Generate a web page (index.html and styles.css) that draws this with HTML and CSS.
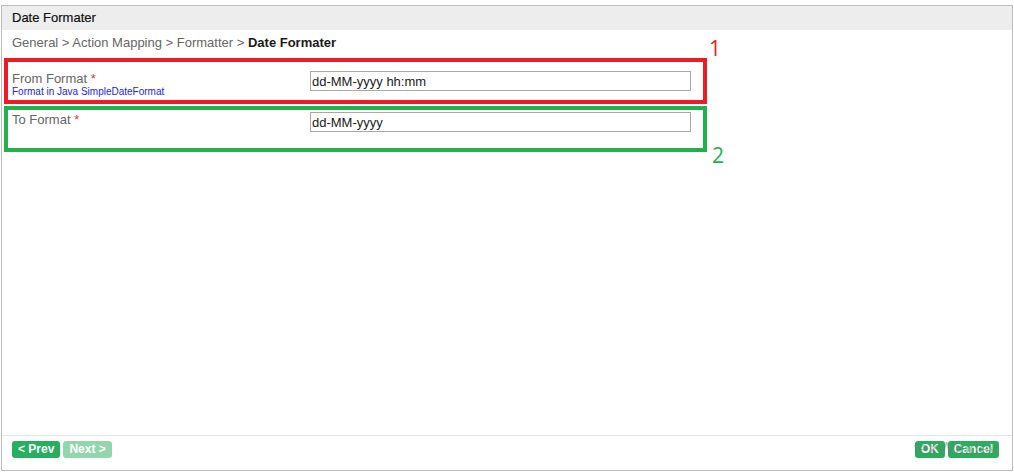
FILE: index.html
```html
<!DOCTYPE html>
<html>
<head>
<meta charset="utf-8">
<link rel="stylesheet" href="styles.css">
</head>
<body>
<div class="panel">
  <div class="panel-header">Date Formater</div>
  <div class="breadcrumb">General &gt; Action Mapping &gt; Formatter &gt; <b>Date Formater</b></div>
  <div class="form">
    <div class="row row-red">
      <div class="label">
        <div>From Format <span class="req">*</span></div>
        <div class="hint">Format in Java SimpleDateFormat</div>
      </div>
      <input class="field" type="text" value="dd-MM-yyyy hh:mm">
      <span class="mark mark-red">1</span>
    </div>
    <div class="row row-green">
      <div class="label">
        <div>To Format <span class="req">*</span></div>
      </div>
      <input class="field" type="text" value="dd-MM-yyyy">
      <span class="mark mark-green">2</span>
    </div>
  </div>
  <div class="footer">
    <div class="btns">
      <span class="btn">&lt; Prev</span>
      <span class="btn btn-disabled">Next &gt;</span>
    </div>
    <div class="btns">
      <span class="btn">OK</span>
      <span class="btn">Cancel</span>
    </div>
    <span class="watermark">tekWindev</span>
  </div>
</div>
</body>
</html>
```
FILE: styles.css
```css
html, body {
  margin: 0;
  padding: 0;
  background: #fff;
}
body {
  font-family: "Liberation Sans", Arial, sans-serif;
  font-size: 13px;
  color: #222;
}
.panel {
  box-sizing: border-box;
  margin: 5px 0 0 1px;
  width: 1012px;
  height: 466px;
  border: 1px solid #bdbdbd;
  display: flex;
  flex-direction: column;
}
.panel-header {
  height: 24px;
  line-height: 24px;
  background: #ededed;
  padding-left: 10px;
  color: #111;
  font-weight: 500;
  -webkit-text-stroke: 0.2px #111;
}
.breadcrumb {
  height: 26px;
  line-height: 26px;
  padding-left: 10px;
  color: #666;
}
.breadcrumb b {
  color: #1a1a1a;
}
.form {
  flex: 1;
  padding: 2px 0 0 2px;
  display: flex;
  flex-direction: column;
  gap: 2px;
}
.row {
  position: relative;
  box-sizing: border-box;
  width: 703px;
  height: 46px;
  border: 4px solid;
  display: flex;
  align-items: flex-start;
  padding-left: 5px;
}
.row-red {
  border-color: #ed1c24;
  padding-top: 9px;
}
.row-green {
  border-color: #22b14c;
  padding-top: 2px;
}
.label {
  width: 298px;
  margin-left: -1px;
  color: #666;
  line-height: 15px;
}
.req {
  color: #e33;
}
.hint {
  font-size: 10px;
  line-height: 11px;
  color: #2424ee;
}
.field {
  box-sizing: border-box;
  width: 381px;
  height: 20px;
  margin: 0;
  border: 1px solid #a9a9a9;
  padding: 0 1px;
  font-family: "Liberation Sans", Arial, sans-serif;
  font-size: 13px;
  color: #222;
  outline: none;
}
.mark {
  position: absolute;
  font-family: "Open Sans", "DejaVu Sans", sans-serif;
  font-size: 21px;
  line-height: 21px;
}
.mark-red {
  color: #ed1c24;
  right: -18px;
  top: -24px;
}
.mark-green {
  color: #22b14c;
  right: -21px;
  top: 35px;
}
.footer {
  position: relative;
  box-sizing: border-box;
  height: 35px;
  border-top: 1px solid #e6e6e6;
  display: flex;
  justify-content: space-between;
  align-items: flex-start;
  padding: 5px 13px 0 10px;
}
.btns {
  display: flex;
  gap: 3px;
}
.btn {
  display: inline-block;
  background: #27ae5f;
  color: #fff;
  font-weight: bold;
  font-size: 12px;
  line-height: 17px;
  height: 17px;
  padding: 0 6px;
  border-radius: 3px;
}
.btn-disabled {
  background: #93d6ae;
}
.watermark {
  position: absolute;
  right: 14px;
  top: 3px;
  font-size: 18px;
  color: rgba(120, 120, 120, 0.5);
  pointer-events: none;
}
```
